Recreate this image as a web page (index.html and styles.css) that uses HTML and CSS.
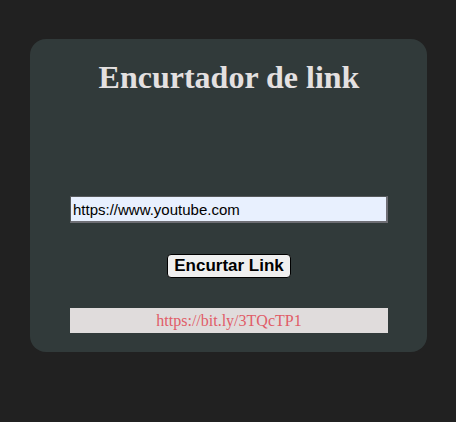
FILE: index.html
```html
<!DOCTYPE html>
<html lang="pt">
<head>
<meta charset="utf-8">
<title>Encurtador de link</title>
<link rel="stylesheet" href="styles.css">
</head>
<body>
<main class="card">
  <h1 class="title">Encurtador de link</h1>
  <input class="url-input" type="text" value="https://www.youtube.com">
  <button class="shorten-btn" type="button">Encurtar Link</button>
  <div class="result">https://bit.ly/3TQcTP1</div>
</main>
</body>
</html>
```
FILE: styles.css
```css
html, body {
  margin: 0;
  padding: 0;
  background: #212121;
}
body {
  width: 456px;
  height: 422px;
  padding-top: 39px;
  box-sizing: border-box;
}
.card {
  width: 397px;
  height: 313px;
  margin: 0 auto;
  background: #313a3a;
  border-radius: 16px;
  box-sizing: border-box;
  display: flex;
  flex-direction: column;
  align-items: center;
  padding-top: 20px;
  padding-left: 2px;
}
.title {
  margin: 0;
  font-family: "Liberation Serif", "Times New Roman", serif;
  font-weight: bold;
  font-size: 32px;
  line-height: 37px;
  color: #e4e0e0;
}
.url-input {
  margin-top: 100px;
  width: 318px;
  height: 27px;
  box-sizing: border-box;
  background: #e8f0fe;
  border: 2px solid #6e6e74;
  border-top-color: #55585a;
  border-left-color: #55585a;
  border-top-width: 1px;
  border-left-width: 1px;
  padding: 0 2px;
  font-family: "Liberation Sans", Arial, sans-serif;
  font-size: 15px;
  color: #000;
  outline: none;
}
.shorten-btn {
  margin-top: 31px;
  height: 24px;
  padding: 0 6px;
  background: #efefef;
  border: 1px solid #000;
  border-radius: 4px;
  font-family: "Liberation Sans", Arial, sans-serif;
  font-weight: bold;
  font-size: 17px;
  color: #000;
  line-height: 20px;
}
.result {
  margin-top: 30px;
  width: 318px;
  height: 25px;
  background: #e0dcdc;
  color: #e05c68;
  font-family: "Liberation Serif", "Times New Roman", serif;
  font-size: 16px;
  line-height: 25px;
  text-align: center;
}
```
